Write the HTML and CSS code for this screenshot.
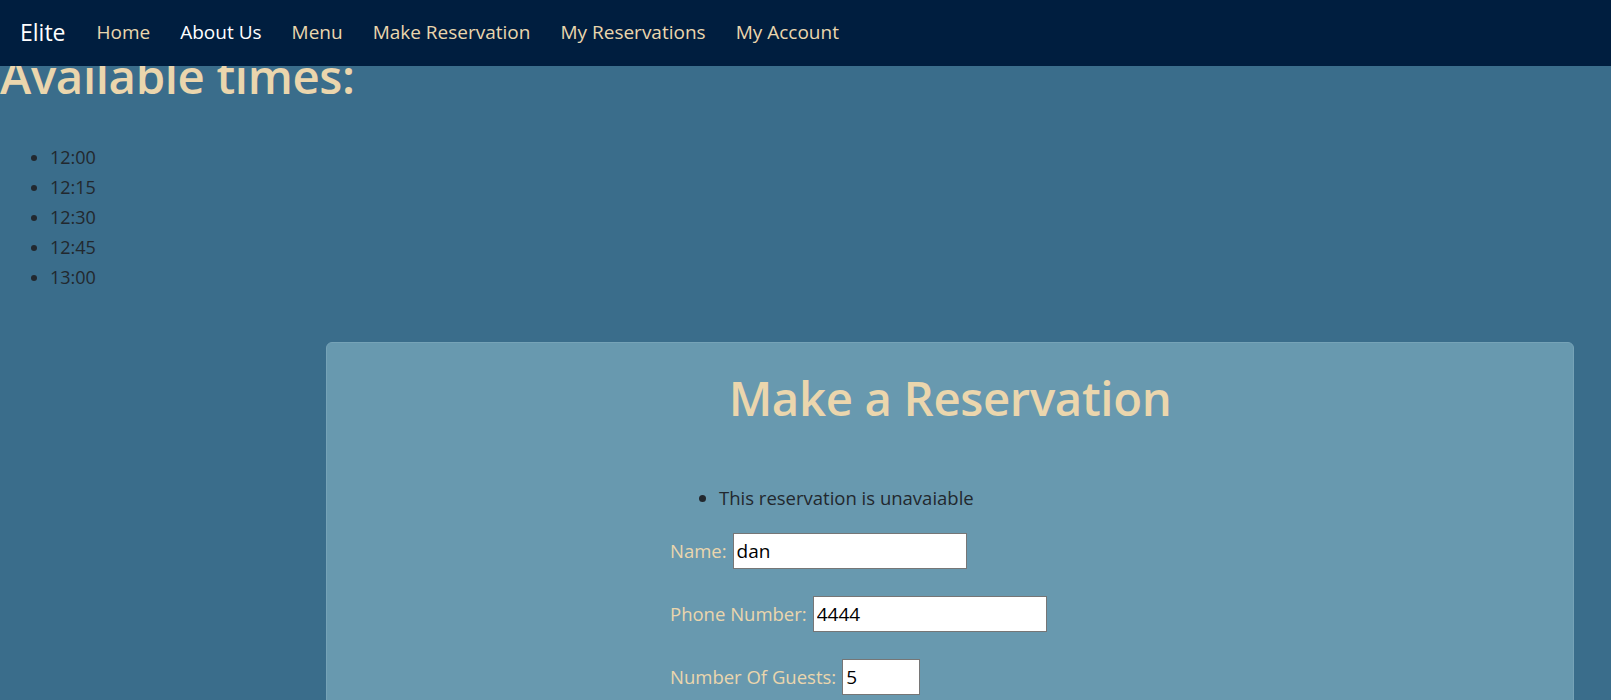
FILE: index.html
```html
<!DOCTYPE html>
<html lang="en">
<head>
<meta charset="utf-8">
<title>Elite - Make Reservation</title>
<link rel="stylesheet" href="styles.css">
</head>
<body>
<nav class="navbar">
  <a class="brand" href="#">Elite</a>
  <ul class="nav-links">
    <li><a class="nav-link" href="#">Home</a></li>
    <li><a class="nav-link light" href="#">About Us</a></li>
    <li><a class="nav-link" href="#">Menu</a></li>
    <li><a class="nav-link" href="#">Make Reservation</a></li>
    <li><a class="nav-link" href="#">My Reservations</a></li>
    <li><a class="nav-link" href="#">My Account</a></li>
  </ul>
</nav>
<main class="page">
  <h1 class="times-title">Available times:</h1>
  <ul class="times-list">
    <li>12:00</li>
    <li>12:15</li>
    <li>12:30</li>
    <li>12:45</li>
    <li>13:00</li>
  </ul>
  <section class="card">
    <h1 class="card-title">Make a Reservation</h1>
    <form class="res-form">
      <ul class="errors">
        <li>This reservation is unavaiable</li>
      </ul>
      <div class="row">
        <label class="lbl" for="name">Name:</label>
        <input class="field field-name" id="name" type="text" value="dan">
      </div>
      <div class="row">
        <label class="lbl" for="phone">Phone Number:</label>
        <input class="field field-phone" id="phone" type="text" value="4444">
      </div>
      <div class="row">
        <label class="lbl" for="guests">Number Of Guests:</label>
        <input class="field field-guests" id="guests" type="text" value="5">
      </div>
    </form>
  </section>
</main>
</body>
</html>
```

FILE: styles.css
```css
* { box-sizing: border-box; }

html, body {
  margin: 0;
  padding: 0;
}

body {
  background: #3a6d8b;
  font-family: "Open Sans", "Noto Sans", sans-serif;
  font-size: 18px;
  line-height: 30px;
  color: #22282e;
}

.navbar {
  position: fixed;
  top: 0;
  left: 0;
  right: 0;
  height: 66px;
  background: #001e3f;
  display: flex;
  align-items: center;
  padding: 0 20px;
  z-index: 10;
}

.brand {
  color: #ffffff;
  font-size: 23px;
  text-decoration: none;
  margin-right: 16px;
  margin-top: -2px;
}

.nav-links {
  list-style: none;
  margin: 0;
  padding: 0;
  display: flex;
  margin-top: -2px;
}

.nav-link {
  display: block;
  padding: 0 15px 0 15px;
  color: #ead6ad;
  font-size: 19px;
  text-decoration: none;
}

.nav-link.light { color: #ffffff; }

.page {
  padding-top: 47px;
  padding-bottom: 40px;
}

.times-title,
.card-title {
  font-size: 47.3px;
  font-weight: 600;
  line-height: 57.6px;
  color: #ebd6ad;
  margin: 0;
  letter-spacing: -0.35px;
}

.times-list {
  margin: 37px 0 50px;
  padding-left: 50px;
}

.card {
  margin: 0 37px 0 326px;
  background: #6899af;
  border: 1px solid #76a3b7;
  border-radius: 6px;
  padding: 26px 0 60px;
}

.card-title {
  text-align: center;
}

.res-form {
  width: 560px;
  margin: 57px auto 0;
}

.errors {
  margin: 0 0 20px;
  padding-left: 49px;
  font-size: 18.5px;
}

.row {
  display: flex;
  align-items: center;
  gap: 6px;
  height: 36px;
  margin-bottom: 27px;
  font-size: 18.5px;
}

.lbl {
  color: #ebd6ad;
}

.field {
  height: 36px;
  border: 1px solid #767676;
  background: #ffffff;
  font-family: "Open Sans", "Noto Sans", sans-serif;
  font-size: 19px;
  color: #000000;
  padding: 0 3px;
  margin: 0;
}

.field-name,
.field-phone { width: 234px; }

.field-guests { width: 78px; }
```
